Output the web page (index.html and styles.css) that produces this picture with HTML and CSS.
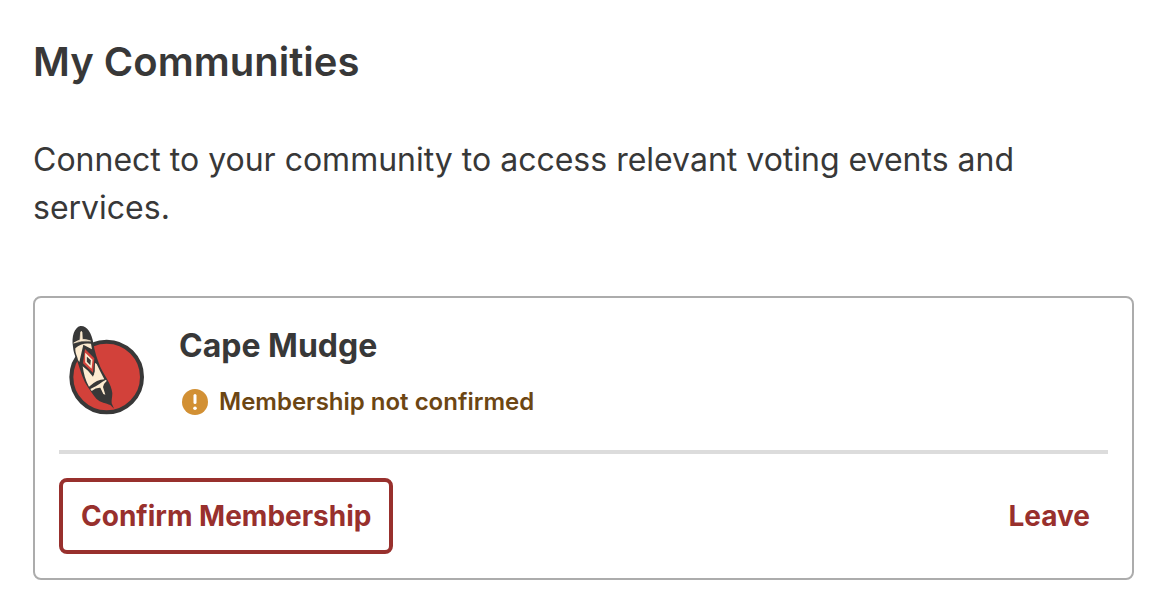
FILE: index.html
```html
<!DOCTYPE html>
<html lang="en">

<head>
    <meta charset="utf-8">
    <meta name="viewport" content="width=device-width, initial-scale=1">
    <title>My Communities</title>
    <link rel="stylesheet" href="styles.css">
</head>

<body>
    <main class="page">
        <h1 class="page-title">My Communities</h1>
        <p class="intro">Connect to your community to access relevant voting events and services.</p>

        <section class="card">
            <div class="card-header">
                <svg class="logo" viewBox="-3 21 288 270" aria-hidden="true">
                    <circle cx="140" cy="177" r="106" fill="#d2413a" stroke="#383838" stroke-width="12" />
                    <!-- feather -->
                    <path d="M39 86C34 56 43 28 61 24C80 22 95 44 100 75C103 98 112 126 121 147C133 173 155 198 157 226C157 238 154 246 155 256L162 272L151 261C139 255 121 254 109 242C98 229 94 222 86 211C68 185 63 162 55 139C51 121 41 112 39 86Z" fill="#383838" />
                    <path d="M41 75Q53 68 60 66L62 42Q64 38 66 42L67 64Q80 64 92 69Q64 66 41 75Z" fill="#fdebd0" stroke="#fdebd0" stroke-width="2" />
                    <path d="M46 91Q64 73 93 77L96 94L70 80L58 132L54 126C51 112 45 106 46 91Z" fill="#fdebd0" />
                    <path d="M68 145L84 158L99 176L104 160L104 134L110 138L122 163L133 184Q112 184 87 206C76 187 71 166 68 145Z" fill="#fdebd0" />
                    <path d="M73 86L106 120L102 172L64 139Z" fill="#383838" />
                    <path d="M75 93L103 121L99 164L69 136Z" fill="#d2413a" />
                    <path d="M78 110L95 126L93 147L78 132Z" fill="#383838" stroke="#fdebd0" stroke-width="5" />
                    <path d="M91 213Q110 204 118 198Q127 190 138 185L140 189L132 198L129 207L136 230L130 228L121 209Q108 208 95 219Z" fill="#fdebd0" />
                </svg>
                <div class="details">
                    <h2 class="name">Cape Mudge</h2>
                    <p class="status">
                        <svg class="status-icon" viewBox="0 0 26 26" aria-hidden="true">
                            <circle cx="13" cy="13" r="13" fill="#d29034" />
                            <path d="M13 6.4V13.4" stroke="#fff" stroke-width="3" stroke-linecap="round" />
                            <circle cx="13" cy="19.3" r="1.8" fill="#fff" />
                        </svg>
                        Membership not confirmed
                    </p>
                </div>
            </div>
            <div class="actions">
                <button type="button" class="btn btn-outline">Confirm Membership</button>
                <button type="button" class="btn btn-text">Leave</button>
            </div>
        </section>
    </main>
</body>

</html>
```

FILE: styles.css
```css
* {
    box-sizing: border-box;
}

body {
    margin: 0;
    background: #fff;
    color: #383838;
    font-family: Inter, sans-serif;
}

.page {
    padding: 32px 38px 24px 33px;
}

.page-title {
    margin: 0 0 44px;
    font-size: 40px;
    line-height: 60px;
    font-weight: 600;
}

.intro {
    margin: 0 0 64px;
    font-size: 32px;
    line-height: 48px;
}

.card {
    padding: 24px;
    border: 2px solid #acacac;
    border-radius: 8px;
}

.card-header {
    display: flex;
    align-items: flex-start;
    gap: 24px;
    padding-bottom: 30px;
    border-bottom: 4px solid #dcdcdc;
}

.logo {
    width: 96px;
    height: 90px;
    margin-top: 3px;
}

.name {
    margin: 0 0 14px;
    font-size: 32px;
    line-height: 48px;
    font-weight: 700;
}

.status {
    display: flex;
    align-items: center;
    gap: 11px;
    margin: 0;
    padding-left: 3px;
    color: #6c4613;
    font-size: 24px;
    line-height: 36px;
    font-weight: 600;
}

.status-icon {
    width: 26px;
    height: 26px;
}

.actions {
    display: flex;
    justify-content: space-between;
    padding-top: 24px;
}

.btn {
    padding: 14px 18px;
    border: 4px solid transparent;
    border-radius: 8px;
    background: none;
    color: #98302d;
    font-family: inherit;
    font-size: 28px;
    line-height: 40px;
    font-weight: 700;
    cursor: pointer;
}

.btn-outline {
    border-color: #98302d;
}

.btn-text {
    padding: 14px;
}
```
